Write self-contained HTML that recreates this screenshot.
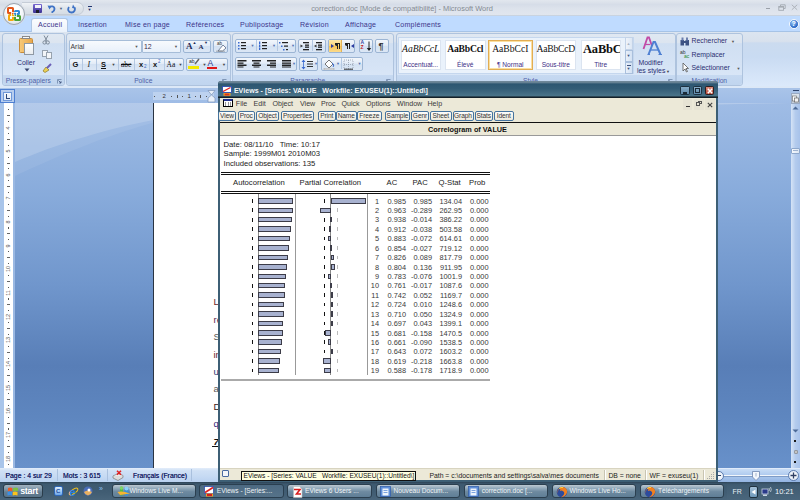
<!DOCTYPE html>
<html><head><meta charset="utf-8">
<style>
*{margin:0;padding:0;box-sizing:border-box}
html,body{width:800px;height:500px;overflow:hidden;background:#6d93c8;font-family:"Liberation Sans",sans-serif}
div,span,svg{position:absolute;white-space:nowrap}
/* word chrome */
#title{left:0;top:0;width:800px;height:16px;background:linear-gradient(#e2e7ee,#d6dde8 30%,#dde3ec 60%,#e1e6ee);border-bottom:1px solid #c9d3e0}
#tabs{left:0;top:16px;width:800px;height:16px;background:#bfdbff;border-bottom:1px solid #a6c3e6}
#ribbon{left:0;top:32px;width:800px;height:55px;background:linear-gradient(#dce5f0,#d8e1ed 17%,#cbdbef 20%,#c9dbf2 45%,#dceafb 100%)}
.grp{top:32.5px;height:53px;border:1px solid #aec3de;border-radius:3px;background:linear-gradient(#e0e8f2,#dce5f0 17%,#d0dff2 19%,#d5e3f5 60%,#dbe8f8)}
.glab{left:0;bottom:0;width:100%;height:10px;background:linear-gradient(#c6d9f1,#c0d5ef);font-size:6.7px;color:#4f5fa6;text-align:center;line-height:10px;padding-top:1px;border-radius:0 0 3px 3px}
.rt{font-size:6.9px;color:#2a2f72;line-height:8px}
.tab{top:21px;font-size:7.1px;color:#3c358a;line-height:8px;letter-spacing:0.2px}
.box{border:1px solid #a6bdd8;background:linear-gradient(#f7fafd,#e8f0fa);border-radius:1px}
.bg2{border:1px solid #9cb5d4;border-radius:2px;background:linear-gradient(#f3f7fc,#e2ebf7 45%,#d3e1f2 50%,#dce7f5)}
.sep{width:1px;background:#b4c8e2}
.stl{top:40px;height:30px;background:#fff;border:1px solid #dbe4f0}
.stl .s1{left:0;top:2px;width:100%;text-align:center;font-family:"Liberation Serif",serif;font-size:9.6px;color:#111;line-height:11px}
.stl .s2{left:0;top:20px;width:100%;text-align:center;font-size:6.6px;color:#3d2f86;line-height:8px}
.dd{font-size:4px;color:#444;line-height:4px}
/* doc */
.vr{left:4px;width:8.8px;height:6px;text-align:center;font-size:5.5px;color:#555;line-height:6px;transform:rotate(-90deg)}
.vd{width:1.2px;height:1.2px;background:#555}
.vh{width:3.5px;height:1px;background:#666}
.wl{left:213.5px;font-size:9.5px;line-height:10px}
.stt{top:471.5px;font-size:6.85px;color:#1f2868;line-height:8px;text-shadow:0 0 0.2px #1f2868}
/* taskbar */
.tbtn{top:484.4px;height:14px;border:1px solid #2b3f4f;border-radius:3px;background:linear-gradient(#bcc8d1,#8ea6b8 30%,#6e8aa0 55%,#5f7e96);font-size:6.6px;color:#f0f4f7;line-height:12px;padding-left:17px;overflow:hidden}
.tbtn.act{background:linear-gradient(#4d6a82,#557289);border-color:#2a3f50}
/* EViews */
#ev{left:218px;top:81px;width:500px;height:401px;background:#3d5f75;border-radius:3px 3px 0 0}
#evtitle{left:0;top:0;width:500px;height:16.5px;background:linear-gradient(#72889a,#6a8496 8%,#2d5671 18%,#335c76 45%,#4a7489 88%,#1a2a34 93%,#0f1a20);border-radius:3px 3px 0 0}
#evtt{left:15.9px;top:6.5px;font-size:7.1px;font-weight:bold;color:#f4f6f8;line-height:7px}
#evmenu{left:2px;top:16.5px;width:496px;height:12.5px;background:#ece9d8}
#evmenu span{top:2.5px;font-size:7.1px;color:#3a3a3a;line-height:8px}
#evtool{left:2px;top:29px;width:496px;height:12px;background:#ece9d8}
.tb{top:0.5px;height:10.5px;border:1px solid #45739e;border-radius:2px;background:linear-gradient(#fdfdfb,#ece9dc);font-size:6.6px;color:#333;text-align:center;line-height:8.5px;letter-spacing:-0.1px}
.bar{height:5.6px;background:#a8b2d0;border:1px solid #3c3c48}
.dash{width:1.2px;height:3.8px;background:#111}
.dash.g{background:#bbb}
.num{font-size:7.4px;color:#3a3a3a;text-align:right;line-height:7px}
.t7{font-size:7.7px;color:#222;line-height:8px}

</style></head><body>
<div id="title"></div>
<div style="left:310.5px;top:5px;width:183px;text-align:center;font-size:7.45px;color:#858b93;line-height:8px">correction.doc [Mode de compatibilité] - Microsoft Word</div>
<div style="left:765.8px;top:7.8px;width:4.5px;height:1.2px;background:#9ba1aa"></div>
<svg style="left:777.5px;top:4px" width="8" height="7"><path d="M2.5 2.5V0.8H7.2V4.5H5.5" stroke="#a3a9b1" stroke-width="0.9" fill="none"/><rect x="0.8" y="2.5" width="4.7" height="3.8" stroke="#a3a9b1" stroke-width="0.9" fill="none"/><path d="M0.8 3H5.5" stroke="#a3a9b1" stroke-width="1.2"/></svg>
<svg style="left:791px;top:4px" width="7" height="6.5"><path d="M0.8 0.8L6.2 5.8M6.2 0.8L0.8 5.8" stroke="#aeb3ba" stroke-width="1"/></svg>
<!-- quick access -->
<div style="left:22px;top:1.5px;width:62px;height:13px;border-radius:0 7px 7px 0;background:linear-gradient(#f0f3f6,#dfe4ea 50%,#d5dce5);border:1px solid #c5ccd6;border-left:none"></div>
<div style="left:33px;top:4px;width:9px;height:9px;background:linear-gradient(#7a6ad2,#3c3394);border-radius:1px"></div>
<div style="left:34.5px;top:4.5px;width:6px;height:3.5px;background:#f2f2fa"></div>
<div style="left:35.5px;top:10px;width:3px;height:2.5px;background:#1d1d2a"></div>
<svg style="left:47px;top:4px" width="9" height="9"><path d="M2 3.5C4 1.5 7.5 2 7.5 5C7.5 7 6 8 4.5 8.5" stroke="#3f73c6" stroke-width="1.8" fill="none"/><path d="M0.5 1.5L2.5 5.5L4.5 2Z" fill="#3f73c6"/></svg>
<div class="dd" style="left:59px;top:7px;color:#4d5e7a">▼</div>
<svg style="left:67px;top:3.5px" width="9" height="10"><path d="M2 3C0.5 5 1 8.5 4.5 8.5C7.5 8.5 8.5 5.5 7.5 3.5" stroke="#3f73c6" stroke-width="1.8" fill="none"/><path d="M6 0.5L8.5 4.5L5 4Z" fill="#3f73c6"/></svg>
<div style="left:87.5px;top:6px;width:4px;height:1px;background:#23356e"></div>
<div class="dd" style="left:87.5px;top:7.5px;color:#23356e">▼</div>
<div id="tabs"></div>
<div style="left:30.5px;top:17.5px;width:37px;height:15.5px;border:1px solid #afc6e3;border-bottom:none;border-radius:3px 3px 0 0;background:linear-gradient(#fbfcfe,#e9f1fb)"></div>
<div class="tab" style="left:38px">Accueil</div>
<div class="tab" style="left:78px">Insertion</div>
<div class="tab" style="left:125px">Mise en page</div>
<div class="tab" style="left:186px">Références</div>
<div class="tab" style="left:240px">Publipostage</div>
<div class="tab" style="left:300px">Révision</div>
<div class="tab" style="left:345px">Affichage</div>
<div class="tab" style="left:395px">Compléments</div>
<div style="left:788.5px;top:18.5px;width:10.5px;height:10.5px;border-radius:50%;background:radial-gradient(circle at 40% 35%,#9ccbf8,#2262c4 70%,#1a4aa0);border:1px solid #f4f8fd;font-size:7px;font-weight:bold;color:#fff;text-align:center;line-height:8.5px">?</div>
<!-- office button -->
<div style="left:2.9px;top:2.9px;width:22.6px;height:22.6px;border-radius:50%;background:radial-gradient(circle at 50% 35%,#ffffff 30%,#eef2f6 60%,#c9d0d8);border:1px solid #9aa3ae;box-shadow:0 0 0 0.6px #d5dbe2"></div>
<div style="left:7px;top:7px;width:7px;height:7px;border:2px solid #e4561b;border-radius:1.5px"></div>
<div style="left:13.5px;top:10px;width:6px;height:5px;border:2px solid #2f8ad8;border-radius:1.5px"></div>
<div style="left:8px;top:14px;width:6px;height:7px;border:2px solid #f4a90f;border-radius:1.5px"></div>
<div style="left:14px;top:15px;width:7px;height:6px;border:2px solid #49a336;border-radius:1.5px"></div>
<div style="left:11px;top:12px;width:6px;height:5px;border:1px solid #fff;opacity:0.8"></div>
<div id="ribbon"></div>
<div class="grp" style="left:2px;width:62.5px"><div class="glab" style="padding-right:10px">Presse-papiers</div></div>
<div class="grp" style="left:66px;width:164.5px"><div class="glab" style="padding-right:10px">Police</div></div>
<div class="grp" style="left:231.5px;width:162.5px"><div class="glab" style="padding-right:10px">Paragraphe</div></div>
<div class="grp" style="left:395.5px;width:280px"><div class="glab" style="padding-right:10px">Style</div></div>
<div class="grp" style="left:676px;width:66.5px"><div class="glab">Modification</div></div>
<svg style="left:57px;top:79px" width="5" height="5"><path d="M0.5 4.5V0.5H4.5" stroke="#6f86a8" stroke-width="0.8" fill="none"/><path d="M1.5 1.5L4 4M4 2.2V4H2.2" stroke="#3b4f78" stroke-width="0.8" fill="none"/></svg>
<svg style="left:222px;top:79px" width="5" height="5"><path d="M0.5 4.5V0.5H4.5" stroke="#6f86a8" stroke-width="0.8" fill="none"/><path d="M1.5 1.5L4 4M4 2.2V4H2.2" stroke="#3b4f78" stroke-width="0.8" fill="none"/></svg>
<svg style="left:386px;top:79px" width="5" height="5"><path d="M0.5 4.5V0.5H4.5" stroke="#6f86a8" stroke-width="0.8" fill="none"/><path d="M1.5 1.5L4 4M4 2.2V4H2.2" stroke="#3b4f78" stroke-width="0.8" fill="none"/></svg>
<svg style="left:667.5px;top:79px" width="5" height="5"><path d="M0.5 4.5V0.5H4.5" stroke="#6f86a8" stroke-width="0.8" fill="none"/><path d="M1.5 1.5L4 4M4 2.2V4H2.2" stroke="#3b4f78" stroke-width="0.8" fill="none"/></svg>
<!-- presse papiers -->
<div style="left:18.5px;top:37.5px;width:14px;height:15px;background:linear-gradient(90deg,#f7c978,#e9a84c);border:1px solid #c98c38;border-radius:1.5px"></div>
<div style="left:21.5px;top:36px;width:8px;height:3px;background:#fafafa;border:1px solid #8a8a8a"></div>
<div style="left:24px;top:43px;width:10px;height:11.5px;background:linear-gradient(#fff,#e9ecef);border:1px solid #8f99a4"></div>
<div class="rt" style="left:17px;top:58.5px">Coller</div>
<svg style="left:23.5px;top:68px" width="6" height="4"><path d="M0.5 0.5H5.5L3 3.5Z" fill="#3a4670"/></svg>
<svg style="left:42px;top:35px" width="8" height="10"><path d="M2 0.5L5 6M6 0.5L3 6" stroke="#7d8a99" stroke-width="1" fill="none"/><circle cx="2.5" cy="7.5" r="1.6" stroke="#7d8a99" fill="none"/><circle cx="5.8" cy="7.5" r="1.6" stroke="#7d8a99" fill="none"/></svg>
<div style="left:42px;top:50px;width:6px;height:6.5px;border:1px solid #97a2ae;background:#f3f5f8"></div>
<div style="left:45.5px;top:52px;width:6px;height:6.5px;border:1px solid #97a2ae;background:#f3f5f8"></div>
<svg style="left:41.5px;top:63px" width="11" height="10"><path d="M1 8L4 4L7 7L3 9.5Z" fill="#ecd055" stroke="#8d7a2a" stroke-width="0.7"/><path d="M5 5L9 1" stroke="#6a5fb7" stroke-width="2"/></svg>
<!-- police -->
<div class="box" style="left:68.5px;top:39.5px;width:73.5px;height:13px"></div>
<div class="rt" style="left:70.5px;top:42.5px;color:#3a3a3a">Arial</div>
<div class="dd" style="left:134.5px;top:45px;color:#555">▼</div>
<div class="box" style="left:142px;top:39.5px;width:38.5px;height:13px"></div>
<div class="rt" style="left:144px;top:42.5px;color:#3a2a4a">12</div>
<div class="dd" style="left:174px;top:45px;color:#555">▼</div>
<div class="bg2" style="left:182.8px;top:39.5px;width:28px;height:13px"></div>
<div style="left:186px;top:42px;font-family:'Liberation Serif',serif;font-size:9px;font-weight:bold;color:#1d2a55;line-height:9px">A</div>
<div class="dd" style="left:192.5px;top:40.5px;color:#1d2a55">▲</div>
<div style="left:198.5px;top:44px;font-family:'Liberation Serif',serif;font-size:7px;font-weight:bold;color:#1d2a55;line-height:7px">A</div>
<div class="dd" style="left:204px;top:40.5px;color:#1d2a55">▼</div>
<div class="bg2" style="left:212.8px;top:39.5px;width:15px;height:13px"></div>
<svg style="left:214px;top:40px" width="13" height="12"><text x="3" y="5" font-size="4.5" fill="#333" font-family="Liberation Sans">ab</text><path d="M4 11L9 5L12 8L8.5 11Z" fill="#fff" stroke="#5a6a86" stroke-width="0.8"/><path d="M2 11.2H11" stroke="#777" stroke-width="0.6"/></svg>
<div class="bg2" style="left:68.5px;top:57.5px;width:115px;height:13px"></div>
<div class="sep" style="left:82px;top:58.5px;height:11px"></div>
<div class="sep" style="left:96px;top:58.5px;height:11px"></div>
<div class="sep" style="left:118px;top:58.5px;height:11px"></div>
<div class="sep" style="left:134px;top:58.5px;height:11px"></div>
<div class="sep" style="left:149px;top:58.5px;height:11px"></div>
<div class="sep" style="left:164px;top:58.5px;height:11px"></div>
<div style="left:72.5px;top:60.5px;font-size:7.5px;font-weight:bold;color:#111;line-height:8px">G</div>
<div style="left:87.5px;top:60.5px;font-family:'Liberation Serif',serif;font-size:8px;font-style:italic;color:#222;line-height:8px">I</div>
<div style="left:101px;top:60.5px;font-size:7.5px;font-weight:bold;color:#111;line-height:8px;text-decoration:underline">S</div>
<div class="dd" style="left:111.5px;top:63px;color:#444">▼</div>
<div style="left:121px;top:60.5px;font-family:'Liberation Serif',serif;font-size:7.5px;color:#111;line-height:8px;text-decoration:line-through">abe</div>
<div style="left:139px;top:60.5px;font-size:7.5px;font-weight:bold;color:#111;line-height:8px">x</div>
<div style="left:144px;top:64px;font-size:4.5px;color:#3a64c0;line-height:5px">2</div>
<div style="left:153px;top:60.5px;font-size:7.5px;font-weight:bold;color:#111;line-height:8px">x</div>
<div style="left:158px;top:59px;font-size:4.5px;color:#3a64c0;line-height:5px">2</div>
<div style="left:166.5px;top:60.5px;font-family:'Liberation Serif',serif;font-size:7.5px;color:#111;line-height:8px">Aa</div>
<div class="dd" style="left:178.5px;top:63px;color:#444">▼</div>
<div class="bg2" style="left:185.5px;top:57.5px;width:42px;height:13px"></div>
<div style="left:189px;top:58.5px;font-size:5px;color:#222;line-height:5px">ab</div>
<svg style="left:194px;top:58px" width="6" height="7"><path d="M1 6L5 1" stroke="#666" stroke-width="1.5"/></svg>
<div style="left:187.5px;top:65.5px;width:11px;height:3px;background:#f4ea00"></div>
<div class="dd" style="left:202.5px;top:63px;color:#444">▼</div>
<div style="left:207.5px;top:58.5px;font-size:8.5px;color:#27358a;line-height:8px">A</div>
<div style="left:206.5px;top:66.5px;width:10px;height:2.5px;background:#e01818"></div>
<div class="dd" style="left:222px;top:63px;color:#444">▼</div>
<!-- paragraphe -->
<div class="bg2" style="left:234.5px;top:39px;width:61px;height:13.5px"></div>
<div class="sep" style="left:256px;top:40px;height:11px"></div>
<div class="sep" style="left:277px;top:40px;height:11px"></div>
<svg style="left:237px;top:41px" width="60" height="10">
 <g fill="#3a6ad0"><rect x="1" y="1" width="1.5" height="1.5"/><rect x="1" y="4" width="1.5" height="1.5"/><rect x="1" y="7" width="1.5" height="1.5"/></g>
 <g fill="#222"><rect x="4" y="1" width="5" height="1.2"/><rect x="4" y="4" width="5" height="1.2"/><rect x="4" y="7" width="5" height="1.2"/></g>
 <g fill="#3a6ad0"><rect x="22" y="0.5" width="1.3" height="2.5"/><rect x="22" y="3.5" width="1.3" height="2.5"/><rect x="22" y="6.5" width="1.3" height="2.5"/></g>
 <g fill="#222"><rect x="25" y="1" width="5" height="1.2"/><rect x="25" y="4" width="5" height="1.2"/><rect x="25" y="7" width="5" height="1.2"/></g>
 <g fill="#3a6ad0"><rect x="42" y="1" width="1.5" height="1.5"/><rect x="44" y="4.5" width="1.5" height="1.5"/><rect x="46" y="8" width="1.5" height="1.5"/></g>
 <g fill="#222"><rect x="45" y="1" width="6" height="1.2"/><rect x="47" y="4.5" width="4" height="1.2"/><rect x="49" y="8" width="2" height="1.2"/></g>
</svg>
<div class="dd" style="left:250.5px;top:44px;color:#5572b0">▼</div>
<div class="dd" style="left:272px;top:44px;color:#5572b0">▼</div>
<div class="dd" style="left:291px;top:44px;color:#5572b0">▼</div>
<div class="bg2" style="left:298.4px;top:39px;width:27.5px;height:13.5px"></div>
<div class="sep" style="left:312px;top:40px;height:11px"></div>
<svg style="left:300px;top:41px" width="25" height="10">
 <g fill="#222"><rect x="3" y="1" width="6" height="1.3"/><rect x="5" y="3.5" width="4" height="1.3"/><rect x="5" y="5.5" width="4" height="1.3"/><rect x="3" y="8" width="6" height="1.3"/></g>
 <path d="M0.5 3.5L3 5L0.5 6.5Z" fill="#333"/>
 <g fill="#222"><rect x="16" y="1" width="6" height="1.3"/><rect x="18" y="3.5" width="4" height="1.3"/><rect x="18" y="5.5" width="4" height="1.3"/><rect x="16" y="8" width="6" height="1.3"/></g>
 <path d="M16.5 3.5L14 5L16.5 6.5Z" fill="#333"/>
</svg>
<div class="bg2" style="left:328px;top:39px;width:27px;height:13.5px"></div>
<div style="left:328.5px;top:39.5px;width:13.5px;height:12.5px;background:linear-gradient(#fde8a8,#fcd57c 50%,#fac453 51%,#fcdb8c);border-right:1px solid #e2b35a"></div>
<svg style="left:330px;top:41px" width="25" height="10">
 <path d="M1 3L4 5L1 7Z" fill="#2a3aa0"/><path d="M5 2H10V8H9V3H8V8H7V5C5.5 5 5 4 5 3.5Z" fill="#222"/>
 <path d="M15 2H20V8H19V3H18V8H17V5C15.5 5 15 4 15 3.5Z" fill="#222"/><path d="M24 3L21 5L24 7Z" fill="#2a3aa0"/>
</svg>
<div class="bg2" style="left:358.5px;top:39px;width:14.5px;height:13.5px"></div>
<div style="left:360.5px;top:40px;font-size:5px;color:#3a4aa0;line-height:5px;font-weight:bold">A</div>
<div style="left:360.5px;top:45px;font-size:5px;color:#c02020;line-height:5px;font-weight:bold">Z</div>
<svg style="left:366px;top:40.5px" width="6" height="11"><path d="M3 0.5V9" stroke="#222" stroke-width="1"/><path d="M0.8 7L3 10L5.2 7Z" fill="#222"/></svg>
<div class="bg2" style="left:375.4px;top:39px;width:14px;height:13.5px"></div>
<div style="left:378.5px;top:40.5px;font-size:9px;font-weight:bold;color:#333;line-height:10px">¶</div>
<div class="bg2" style="left:234.5px;top:57.3px;width:62.5px;height:13.3px"></div>
<svg style="left:236px;top:59px" width="60" height="9">
 <g fill="#222">
 <rect x="1.5" y="1" width="9" height="1.5"/><rect x="1.5" y="3.5" width="6" height="1.3"/><rect x="1.5" y="5.5" width="9" height="1.5"/><rect x="1.5" y="7.5" width="6" height="1"/>
 <rect x="16" y="1" width="9" height="1.5"/><rect x="17.5" y="3.5" width="6" height="1.3"/><rect x="16" y="5.5" width="9" height="1.5"/><rect x="17.5" y="7.5" width="6" height="1"/>
 <rect x="31" y="1" width="9" height="1.5"/><rect x="34" y="3.5" width="6" height="1.3"/><rect x="31" y="5.5" width="9" height="1.5"/><rect x="34" y="7.5" width="6" height="1"/>
 <rect x="46" y="1" width="9" height="1.5"/><rect x="46" y="3.5" width="9" height="1.3"/><rect x="46" y="5.5" width="9" height="1.5"/><rect x="46" y="7.5" width="9" height="1"/>
 </g>
</svg>
<div class="dd" style="left:292px;top:62px;color:#5572b0">▼</div>
<div class="bg2" style="left:299.3px;top:57.3px;width:19px;height:13.3px"></div>
<svg style="left:301px;top:58.5px" width="16" height="11"><path d="M2.5 1V10" stroke="#3a6ad0" stroke-width="0.8"/><path d="M0.5 3L2.5 0.5L4.5 3ZM0.5 8L2.5 10.5L4.5 8Z" fill="#3a6ad0"/><g fill="#333"><rect x="6" y="2" width="6" height="1"/><rect x="6" y="4.5" width="6" height="1"/><rect x="6" y="7" width="6" height="1"/></g></svg>
<div class="dd" style="left:314px;top:62px;color:#5572b0">▼</div>
<div class="bg2" style="left:321.3px;top:57.3px;width:41.7px;height:13.3px"></div>
<div class="sep" style="left:341px;top:58.3px;height:11px"></div>
<svg style="left:323px;top:58px" width="18" height="12"><path d="M2 6L6 2L10 6L6 10Z" fill="#fff" stroke="#555" stroke-width="0.8"/><path d="M9 5C11 6 11 8 10 9" stroke="#3a6ad0" stroke-width="1" fill="none"/><rect x="1" y="10.3" width="10" height="1.5" fill="#fff" stroke="#999" stroke-width="0.5"/></svg>
<div class="dd" style="left:336px;top:62px;color:#5572b0">▼</div>
<svg style="left:343px;top:58.5px" width="12" height="11"><g stroke="#8a94a4" stroke-width="0.7" stroke-dasharray="1 1" fill="none"><rect x="1" y="1" width="9" height="9"/><path d="M5.5 1V10M1 5.5H10"/></g><path d="M1 10.2H10" stroke="#333" stroke-width="1"/></svg>
<div class="dd" style="left:357.5px;top:62px;color:#5572b0">▼</div>
<!-- styles -->
<div style="left:398px;top:37px;width:236px;height:37px;border:1px solid #c5d7ee;background:#eaf2fb"></div>
<div class="stl" style="left:401px;width:39.5px"><div class="s1" style="font-style:italic">AaBbCcL</div><div class="s2">Accentuat...</div></div>
<div class="stl" style="left:445px;width:40.5px"><div class="s1" style="font-weight:bold;letter-spacing:-0.2px">AaBbCcl</div><div class="s2">Élevé</div></div>
<div class="stl" style="left:488px;width:44.5px;border:1px solid #e2ad53;box-shadow:inset 0 0 0 1px #fbe0a0"><div class="s1">AaBbCcI</div><div class="s2">¶ Normal</div></div>
<div class="stl" style="left:535.5px;width:40.5px"><div class="s1" style="letter-spacing:-0.2px">AaBbCcD</div><div class="s2">Sous-titre</div></div>
<div class="stl" style="left:580.5px;width:40.5px;overflow:hidden"><div class="s1" style="font-size:12.5px;font-weight:bold;top:2px;left:1.5px;text-align:left;line-height:13px;letter-spacing:-0.2px">AaBbC</div><div class="s2">Titre</div></div>
<div style="left:624.5px;top:37px;width:8.5px;height:12.5px;border:1px solid #c3d3e8;background:linear-gradient(90deg,#eef3fa,#dde7f4)"></div>
<div style="left:624.5px;top:49.5px;width:8.5px;height:12px;border:1px solid #a9bfdc;background:linear-gradient(90deg,#e8f0fa,#d3e1f3)"></div>
<div style="left:624.5px;top:61.5px;width:8.5px;height:12px;border:1px solid #a9bfdc;background:linear-gradient(90deg,#e8f0fa,#d3e1f3)"></div>
<div class="dd" style="left:626.5px;top:42px;color:#aab4c4">▲</div>
<div class="dd" style="left:626.5px;top:54px;color:#3c4f7a">▼</div>
<div style="left:626.5px;top:65px;width:4px;height:1px;background:#3c4f7a"></div>
<div class="dd" style="left:626.5px;top:66.5px;color:#3c4f7a">▼</div>
<svg style="left:641px;top:35px" width="24" height="22"><path d="M2.5 14L6.5 2.5H8L11 11" stroke="#c24aa6" stroke-width="1.8" fill="none"/><path d="M4.5 9.5H9" stroke="#c24aa6" stroke-width="1.2"/><path d="M7.5 19.5L12.5 7H14L19.5 19.5" stroke="#4f80d2" stroke-width="2" fill="none"/><path d="M10 15H17.5" stroke="#4f80d2" stroke-width="1.3"/><path d="M6.5 19.5H9M17.5 19.5H21" stroke="#4f80d2" stroke-width="1"/></svg>
<div class="rt" style="left:638.5px;top:59px">Modifier</div>
<div class="rt" style="left:637px;top:67px">les styles</div>
<div class="dd" style="left:666px;top:70px;color:#444">▼</div>
<!-- modification -->
<svg style="left:680px;top:36.5px" width="10" height="9"><rect x="0.5" y="3" width="3.5" height="5.5" fill="#3d5283"/><rect x="5.5" y="3" width="3.5" height="5.5" fill="#3d5283"/><rect x="1.5" y="0.5" width="2" height="3" fill="#6c7fae"/><rect x="6" y="0.5" width="2" height="3" fill="#6c7fae"/><rect x="3" y="4" width="3" height="2" fill="#3d5283"/></svg>
<div class="rt" style="left:691.5px;top:37px">Rechercher</div>
<div class="dd" style="left:731px;top:40px;color:#555">▼</div>
<div style="left:680px;top:49.5px;font-size:5px;color:#333;line-height:5px">ab</div>
<div style="left:684px;top:54px;font-size:5px;color:#2a8a2a;line-height:5px">ac</div>
<div class="rt" style="left:691.5px;top:50.5px">Remplacer</div>
<svg style="left:682px;top:62px" width="7" height="11"><path d="M1 1V9L3 7L4.5 10L5.5 9.5L4 6.5H6.5Z" fill="#fff" stroke="#555" stroke-width="0.8"/></svg>
<div class="rt" style="left:691.5px;top:64px">Sélectionner</div>
<div class="dd" style="left:736.5px;top:67px;color:#555">▼</div>

<div style="left:0;top:86px;width:800px;height:1.5px;background:#dce8f7"></div>
<div style="left:0;top:87.5px;width:800px;height:15.5px;background:linear-gradient(#a9c4e9,#9fbce6)"></div>
<div style="left:0;top:89px;width:15px;height:14px;border:1px solid #4e7fd1;background:#b7cdee"></div>
<div style="left:3px;top:91.5px;width:9px;height:9px;border:1px solid #7099d9;background:linear-gradient(#f5f9fd,#dfe9f7)"></div>
<div style="left:5.8px;top:94px;width:1.1px;height:4.5px;background:#2a4678"></div>
<div style="left:5.8px;top:97.5px;width:4px;height:1.1px;background:#2a4678"></div>
<div style="left:152.5px;top:92px;width:61.5px;height:8px;background:#bdd2ef"></div>
<div style="left:162.5px;top:93px;font-size:6px;color:#333;line-height:6px">2</div>
<div style="left:187.5px;top:93px;font-size:6px;color:#333;line-height:6px">1</div>
<div style="left:154px;top:95.5px;width:1px;height:1.5px;background:#555"></div>
<div style="left:170.5px;top:95.5px;width:1px;height:1.5px;background:#555"></div>
<div style="left:182px;top:95.5px;width:1px;height:1.5px;background:#555"></div>
<div style="left:194.5px;top:95.5px;width:1px;height:1.5px;background:#555"></div>
<div style="left:206px;top:95.5px;width:1px;height:1.5px;background:#555"></div>
<div style="left:176.5px;top:94.5px;width:1px;height:3px;background:#555"></div>
<div style="left:200px;top:94.5px;width:1px;height:3px;background:#555"></div>
<svg style="left:207px;top:89.5px" width="9" height="13"><path d="M1 0.5H8L4.5 5L8 8V12H1V8L4.5 5Z" fill="#e9f0f9" stroke="#7c94b8" stroke-width="0.7"/></svg>
<div style="left:0;top:103px;width:791px;height:365px;background:linear-gradient(#9fbce5 0%,#88abdb 25%,#7096cc 50%,#587eb7 72%,#5e86bf 86%,#6891ca 100%)"></div>
<svg style="left:15px;top:103px" width="776" height="120"><path d="M0 73C45 52 95 30 160 14L776 0H0Z" fill="#fff" fill-opacity="0.07"/><path d="M0 59C40 42 90 25 160 13L776 0H0Z" fill="#fff" fill-opacity="0.17"/></svg>
<div style="left:0;top:103px;width:4px;height:365px;background:#a9c5ea"></div>
<div style="left:12.8px;top:103px;width:2.2px;height:365px;background:#9ab8e2"></div>
<div style="left:4px;top:103px;width:8.8px;height:365px;background:#fff"></div>
<div class="vd" style="left:7.8px;top:109.2px"></div>
<div class="vh" style="left:6.6px;top:115.2px"></div>
<div class="vd" style="left:7.8px;top:121.0px"></div>
<div class="vr" style="top:124.5px">4</div>
<div class="vd" style="left:7.8px;top:132.8px"></div>
<div class="vh" style="left:6.6px;top:138.8px"></div>
<div class="vd" style="left:7.8px;top:144.6px"></div>
<div class="vr" style="top:148.2px">5</div>
<div class="vd" style="left:7.8px;top:156.5px"></div>
<div class="vh" style="left:6.6px;top:162.5px"></div>
<div class="vd" style="left:7.8px;top:168.3px"></div>
<div class="vr" style="top:171.8px">6</div>
<div class="vd" style="left:7.8px;top:180.1px"></div>
<div class="vh" style="left:6.6px;top:186.1px"></div>
<div class="vd" style="left:7.8px;top:191.9px"></div>
<div class="vr" style="top:195.4px">7</div>
<div class="vd" style="left:7.8px;top:203.8px"></div>
<div class="vh" style="left:6.6px;top:209.8px"></div>
<div class="vd" style="left:7.8px;top:215.6px"></div>
<div class="vr" style="top:219.1px">8</div>
<div class="vd" style="left:7.8px;top:227.4px"></div>
<div class="vh" style="left:6.6px;top:233.4px"></div>
<div class="vd" style="left:7.8px;top:239.2px"></div>
<div class="vr" style="top:242.8px">9</div>
<div class="vd" style="left:7.8px;top:251.1px"></div>
<div class="vh" style="left:6.6px;top:257.1px"></div>
<div class="vd" style="left:7.8px;top:262.9px"></div>
<div class="vr" style="top:266.4px">10</div>
<div class="vd" style="left:7.8px;top:274.7px"></div>
<div class="vh" style="left:6.6px;top:280.7px"></div>
<div class="vd" style="left:7.8px;top:286.5px"></div>
<div class="vr" style="top:290.0px">11</div>
<div class="vd" style="left:7.8px;top:298.4px"></div>
<div class="vh" style="left:6.6px;top:304.4px"></div>
<div class="vd" style="left:7.8px;top:310.2px"></div>
<div class="vr" style="top:313.7px">12</div>
<div class="vd" style="left:7.8px;top:322.0px"></div>
<div class="vh" style="left:6.6px;top:328.0px"></div>
<div class="vd" style="left:7.8px;top:333.8px"></div>
<div class="vr" style="top:337.4px">13</div>
<div class="vd" style="left:7.8px;top:345.7px"></div>
<div class="vh" style="left:6.6px;top:351.7px"></div>
<div class="vd" style="left:7.8px;top:357.5px"></div>
<div class="vr" style="top:361.0px">14</div>
<div class="vd" style="left:7.8px;top:369.3px"></div>
<div class="vh" style="left:6.6px;top:375.3px"></div>
<div class="vd" style="left:7.8px;top:381.1px"></div>
<div class="vr" style="top:384.6px">15</div>
<div class="vd" style="left:7.8px;top:393.0px"></div>
<div class="vh" style="left:6.6px;top:399.0px"></div>
<div class="vd" style="left:7.8px;top:404.8px"></div>
<div class="vr" style="top:408.3px">16</div>
<div class="vd" style="left:7.8px;top:416.6px"></div>
<div class="vh" style="left:6.6px;top:422.6px"></div>
<div class="vd" style="left:7.8px;top:428.4px"></div>
<div class="vr" style="top:431.9px">17</div>
<div class="vd" style="left:7.8px;top:440.3px"></div>
<div class="vh" style="left:6.6px;top:446.3px"></div>
<div class="vd" style="left:7.8px;top:452.1px"></div>
<div class="vr" style="top:455.6px">18</div>
<div class="vd" style="left:7.8px;top:463.9px"></div>
<div style="left:153px;top:103px;width:70px;height:365px;background:#fff;border-left:1px solid #2a3442"></div>
<div class="wl" style="top:297.4px;color:#6a1f2a;">L</div>
<div class="wl" style="top:314.8px;color:#5a2a50;">re</div>
<div class="wl" style="top:332.2px;color:#555;">S</div>
<div class="wl" style="top:349.6px;color:#6a2530;">in</div>
<div class="wl" style="top:367.0px;color:#2a3470;">u</div>
<div class="wl" style="top:384.4px;color:#555;">a</div>
<div class="wl" style="top:401.8px;color:#3a1a1a;">D</div>
<div class="wl" style="top:419.2px;color:#30287a;">q</div>
<div class="wl" style="top:436.6px;color:#111;font-weight:bold;font-style:italic">7</div>
<div style="left:212px;top:445.5px;width:6px;height:1.2px;background:#111"></div>
<div style="left:790.5px;top:87.5px;width:9.5px;height:380.5px;background:linear-gradient(90deg,#d5e3f6,#b3cbed 50%,#a7c2ea)"></div>
<div style="left:790.5px;top:87.5px;width:9.5px;height:5.5px;background:#a9c3e8"></div>
<div style="left:792.5px;top:89.8px;width:6px;height:1.6px;background:#2f446c"></div>
<div style="left:790.5px;top:93px;width:9.5px;height:10.5px;background:linear-gradient(#dfe6ee,#c3ccd8);border:1px solid #9aaac2"></div>
<svg style="left:792px;top:94.5px" width="7" height="8"><rect x="0.5" y="1" width="4" height="5" fill="#fff" stroke="#666" stroke-width="0.6"/><rect x="2.5" y="3" width="4" height="4" fill="#f4f4f4" stroke="#555" stroke-width="0.6"/></svg>
<svg style="left:792px;top:105.5px" width="7" height="4"><path d="M0.5 3.5L3.5 0.5L6.5 3.5Z" fill="#4c6a97"/></svg>
<div style="left:790.5px;top:148px;width:9.5px;height:5.5px;background:linear-gradient(90deg,#f6f9fd,#dbe6f4);border:1px solid #8ea8cc;border-radius:1px"></div>
<div style="left:792.5px;top:150px;width:5px;height:1px;background:#9fb3d0"></div>
<svg style="left:792px;top:429px" width="7" height="4"><path d="M0.5 0.5L3.5 3.5L6.5 0.5Z" fill="#4c6a97"/></svg>
<div style="left:794.3px;top:440px;width:2.2px;height:2.2px;background:#1a1a1a"></div>
<div style="left:793.5px;top:450.3px;width:4px;height:4px;border-radius:50%;background:radial-gradient(#eee,#444)"></div>
<div style="left:794.3px;top:461px;width:2.2px;height:2.2px;background:#1a1a1a"></div>
<div style="left:0;top:468px;width:800px;height:13.7px;background:linear-gradient(#e3edfa,#cfe0f5 20%,#c6daf3 60%,#b9d1f0)"></div>
<div class="stt" style="left:5.5px">Page : 4 sur 29</div>
<div style="left:57px;top:469px;width:1px;height:12px;background:#eef4fb;border-left:1px solid #a9c0de"></div>
<div class="stt" style="left:63px">Mots : 3 615</div>
<div style="left:107px;top:469px;width:1px;height:12px;background:#eef4fb;border-left:1px solid #a9c0de"></div>
<svg style="left:112px;top:469.5px" width="12" height="11"><path d="M1 6L6 8.5L11 5.5L6 3.5Z" fill="#f2f2f2" stroke="#777" stroke-width="0.7"/><path d="M1 6V8L6 10.5L11 7.5V5.5" fill="#ddd" stroke="#777" stroke-width="0.7"/><path d="M5 0.8L9 4.8M9 0.8L5 4.8" stroke="#e02020" stroke-width="1.5"/></svg>
<div class="stt" style="left:133px">Français (France)</div>
<div style="left:191px;top:469px;width:1px;height:12px;background:#eef4fb;border-left:1px solid #a9c0de"></div>
<div style="left:716px;top:468.8px;width:84px;height:12.8px;background:linear-gradient(#c9ddf6,#adc9ee 50%,#93b4e2)"></div>
<div style="left:718px;top:475px;width:70px;height:1px;background:#f2f6fb"></div>
<div style="left:718px;top:476px;width:70px;height:0.8px;background:#7f9cc6"></div>
<div style="left:713px;top:470.5px;width:10.5px;height:10.5px;border-radius:50%;border:1px solid #5d7cae;background:radial-gradient(#fff,#dce7f5)"></div>
<div style="left:715.5px;top:475.3px;width:5px;height:1.2px;background:#2e3f63"></div>
<svg style="left:751.5px;top:470.5px" width="8" height="10"><path d="M0.5 0.5H7.5V6L4 9.5L0.5 6Z" fill="#f3f7fc" stroke="#6e87ae" stroke-width="0.8"/><path d="M4 2V5.5" stroke="#6e87ae" stroke-width="0.6"/></svg>
<div style="left:787.5px;top:470px;width:11px;height:11px;border-radius:50%;border:1px solid #5d7cae;background:radial-gradient(#fff,#dce7f5)"></div>
<svg style="left:789.5px;top:472px" width="7" height="7"><path d="M3.5 0.5V6.5M0.5 3.5H6.5" stroke="#2e3f63" stroke-width="1.3"/></svg>
<div style="left:0;top:481.7px;width:800px;height:18.3px;background:linear-gradient(#2e4457,#3d596f 12%,#415d73 60%,#49657b)"></div>
<div style="left:3.4px;top:484.1px;width:40px;height:14px;border:1px solid #2a3c4a;border-radius:3px;background:linear-gradient(#a2b3c0,#7a92a5 40%,#637d92 60%,#5a7489)"></div>
<svg style="left:7px;top:485.5px" width="12" height="11"><path d="M1 2Q3 1 5.3 2V5.2Q3 4.2 1 5.2Z" fill="#f05a24"/><path d="M6 2.2Q8.5 1 11 2V5.2Q8.5 4.2 6 5.2Z" fill="#7cc242"/><path d="M0.5 6Q2.8 5 5 6V9.5Q2.8 8.5 0.5 9.5Z" fill="#3a8fe6"/><path d="M5.7 6Q8 5 10.5 6V9.5Q8 8.5 5.7 9.5Z" fill="#fbc31a"/></svg>
<div style="left:20.5px;top:486px;font-size:9px;color:#fff;line-height:10px;text-shadow:0 0 0.4px #fff">start</div>
<div style="left:54px;top:486px;width:8.5px;height:9.5px;background:linear-gradient(#dfeefc,#6aa6ea);border-radius:2px;border:1px solid #3068b8"></div>
<div style="left:56px;top:488px;font-size:6px;font-weight:bold;color:#1d4fa0;line-height:6px">C</div>
<svg style="left:68px;top:485.5px" width="11" height="11"><ellipse cx="5.5" cy="5.5" rx="5" ry="2" fill="none" stroke="#f0c020" stroke-width="1" transform="rotate(-35 5.5 5.5)"/><text x="1.2" y="10" font-family="Liberation Sans" font-weight="bold" font-size="11.5" fill="#2a7fe0">e</text></svg>
<svg style="left:83px;top:486px" width="10" height="10"><circle cx="5" cy="5" r="4.5" fill="#4a6db8"/><path d="M1 6Q5 3 9 6Q8 9 5 9.5Q2 9 1 6Z" fill="#e8b060"/><circle cx="6" cy="4" r="1.5" fill="#fff"/></svg>
<div style="left:99px;top:484.5px;font-size:7px;color:#8ec2f0;line-height:7px">»</div>
<div class="tbtn" style="left:111.5px;width:84px">Windows Live M...</div>
<div class="tbtn act" style="left:198.75px;width:85px">EViews - [Series:...</div>
<div class="tbtn" style="left:287px;width:84.75px">EViews 6 Users ...</div>
<div class="tbtn" style="left:375.5px;width:84.5px">Nouveau Docum...</div>
<div class="tbtn" style="left:463.75px;width:84.25px">correction.doc [...</div>
<div class="tbtn" style="left:551.5px;width:84.5px">Windows Live Ho...</div>
<div class="tbtn" style="left:640px;width:83.5px">Téléchargements</div>
<svg style="left:117px;top:486px" width="14" height="11"><rect x="3" y="0.5" width="3" height="9" rx="1.5" fill="#52b848"/><circle cx="4.5" cy="2" r="1.8" fill="#7ed46a"/><rect x="7.5" y="1" width="4" height="9" rx="2" fill="#3a8ed8"/><circle cx="9.5" cy="2.5" r="2" fill="#8ad0f8"/><path d="M0.5 6Q5 4.5 13 7.5Q8 8 3 9Z" fill="#f6b430"/></svg>
<svg style="left:203.5px;top:486px" width="11" height="11"><rect x="0.5" y="0.5" width="9" height="7" fill="#fff" stroke="#2f4fb0" stroke-width="0.8"/><path d="M1 6.5L9 1.5" stroke="#e02020" stroke-width="1.5"/><rect x="2" y="7.5" width="7" height="3" fill="#f0a020"/><rect x="3" y="8" width="5" height="2" fill="#d02020"/></svg>
<svg style="left:291.5px;top:485.5px" width="11" height="12"><path d="M1.5 0.5H7.5L10 3V11.5H1.5Z" fill="#fff" stroke="#bbb" stroke-width="0.6"/><path d="M2 3.5H8L4.5 8H9" stroke="#d81e1e" stroke-width="1.6" fill="none"/></svg>
<svg style="left:380px;top:486px" width="11" height="11"><rect x="0.5" y="0.5" width="10" height="10" fill="#5f8fd8" stroke="#2e5aa8" stroke-width="0.7"/><rect x="2.5" y="2.5" width="6" height="7" fill="#eef4fc"/><rect x="3.5" y="4" width="4" height="0.8" fill="#5f8fd8"/><rect x="3.5" y="6" width="4" height="0.8" fill="#5f8fd8"/></svg>
<svg style="left:468px;top:486px" width="11" height="11"><rect x="0.5" y="0.5" width="10" height="10" fill="#5f8fd8" stroke="#2e5aa8" stroke-width="0.7"/><rect x="2.5" y="2.5" width="6" height="7" fill="#eef4fc"/><rect x="3.5" y="4" width="4" height="0.8" fill="#5f8fd8"/><rect x="3.5" y="6" width="4" height="0.8" fill="#5f8fd8"/></svg>
<svg style="left:556px;top:485.5px" width="12" height="12"><circle cx="6" cy="6" r="5.3" fill="#2d4b9c"/><path d="M1.2 8Q1 2 6 0.8Q11 1 11.2 6Q10 11 5 11.3Q9 9 8 6Q6 3.5 4 5Q5 2 3 3Q1.5 5 1.2 8Z" fill="#f08020"/><path d="M3 2.5Q5 1 7 1.5" stroke="#ffd040" stroke-width="1" fill="none"/></svg>
<svg style="left:644px;top:485.5px" width="12" height="12"><circle cx="6" cy="6" r="5.3" fill="#2d4b9c"/><path d="M1.2 8Q1 2 6 0.8Q11 1 11.2 6Q10 11 5 11.3Q9 9 8 6Q6 3.5 4 5Q5 2 3 3Q1.5 5 1.2 8Z" fill="#f08020"/><path d="M3 2.5Q5 1 7 1.5" stroke="#ffd040" stroke-width="1" fill="none"/></svg>
<div style="left:727px;top:481.7px;width:73px;height:18.3px;background:linear-gradient(#324a5e,#3f5b71 15%,#4a667c)"></div>
<div style="left:732.5px;top:488px;font-size:7px;color:#e6eef5;line-height:8px">FR</div>
<div style="left:748.5px;top:485.5px;width:9.5px;height:12px;border:1px solid #20323f;border-radius:2px;background:linear-gradient(#a6c2d8,#6e98ba)"></div>
<svg style="left:751px;top:488.5px" width="5" height="6"><path d="M4.5 0.5L0.5 3L4.5 5.5Z" fill="#fff"/></svg>
<svg style="left:761px;top:486px" width="12" height="11"><rect x="1" y="3" width="6" height="5" fill="#2a3a8a" stroke="#c8d4e4" stroke-width="0.8"/><rect x="2" y="8.5" width="4" height="1.5" fill="#c8d4e4"/><path d="M8 2Q9 3.5 8 5M9.5 1Q11 3.5 9.5 6" stroke="#dfe8f0" stroke-width="0.7" fill="none"/></svg>
<div style="left:775px;top:488px;font-size:7.5px;color:#f2f6fa;line-height:8px">10:21</div>

<div id="ev">
 <div id="evtitle">
  <svg style="left:3.9px;top:4.6px" width="10" height="10"><rect x="0.5" y="0.5" width="9" height="6" fill="#fff" stroke="#2f4fb0" stroke-width="0.9"/><path d="M1 5.5L8.5 1.5" stroke="#e02020" stroke-width="1.4"/><rect x="1.5" y="7" width="7" height="2.8" fill="#f2b020"/><rect x="2.5" y="7.5" width="5" height="2" fill="#d83020"/></svg>
  <div id="evtt">EViews - [Series: VALUE &nbsp; Workfile: EXUSEU(1)::Untitled\]</div>
  <div style="left:462.4px;top:4.8px;width:9.6px;height:9.6px;border:1px solid #1e3140;border-radius:1.5px;background:linear-gradient(#87acc7,#5f8aab)"></div>
  <div style="left:464.8px;top:11px;width:4.5px;height:1.5px;background:#1b2a36"></div>
  <div style="left:474.6px;top:4.8px;width:9.6px;height:9.6px;border:1px solid #1e3140;border-radius:1.5px;background:linear-gradient(#87acc7,#5f8aab)"></div>
  <div style="left:477px;top:7px;width:5px;height:5px;border:1px solid #1b2a36;border-top-width:1.6px"></div>
  <div style="left:486.6px;top:4.8px;width:9.6px;height:9.6px;border:1px solid #2e1e1e;border-radius:1.5px;background:linear-gradient(#dc8a7a,#b5483a)"></div>
  <svg style="left:488.6px;top:6.8px" width="6" height="6"><path d="M0.8 0.8L5.2 5.2M5.2 0.8L0.8 5.2" stroke="#fff" stroke-width="1.5"/></svg>
 </div>
 <div id="evmenu">
  <div style="left:3.2px;top:1.7px;width:9.6px;height:8px;border:1px solid #000;border-top:2px solid #1f2f8f;background:#fff"></div>
  <div style="left:5px;top:4.5px;width:0.7px;height:4px;background:#999"></div><div style="left:7.5px;top:4.5px;width:0.7px;height:4px;background:#999"></div><div style="left:10px;top:4.5px;width:0.7px;height:4px;background:#999"></div>
  <span style="left:15.8px">File</span><span style="left:33.5px">Edit</span><span style="left:52.5px">Object</span><span style="left:80px">View</span><span style="left:101px">Proc</span><span style="left:121.5px">Quick</span><span style="left:146px">Options</span><span style="left:177px">Window</span><span style="left:207.5px">Help</span>
  <div style="left:462.8px;top:1.5px;width:9.6px;height:10.5px;background:#e6e3d4"></div>
  <div style="left:465.5px;top:8px;width:4.5px;height:1.3px;background:#333"></div>
  <div style="left:474.2px;top:1.5px;width:9.6px;height:10.5px;background:#e6e3d4"></div>
  <div style="left:477.8px;top:3px;width:4.2px;height:3.8px;border:1px solid #555;border-top-width:1.4px"></div>
  <div style="left:476.3px;top:4.8px;width:4.2px;height:3.8px;border:1px solid #555;border-top-width:1.4px;background:#e6e3d4"></div>
  <div style="left:485px;top:1.5px;width:9.6px;height:10.5px;background:#e6e3d4"></div>
  <svg style="left:487.3px;top:4px" width="6" height="6"><path d="M0.8 0.8L5.2 5.2M5.2 0.8L0.8 5.2" stroke="#444" stroke-width="1.1"/></svg>
 </div>
 <div id="evtool">
  <div class="tb" style="left:-2px;width:18px">View</div>
  <div class="tb" style="left:18px;width:16.5px">Proc</div>
  <div class="tb" style="left:36px;width:23px">Object</div>
  <div class="tb" style="left:61px;width:33px">Properties</div>
  <div class="tb" style="left:98px;width:17.5px">Print</div>
  <div class="tb" style="left:116px;width:20.5px">Name</div>
  <div class="tb" style="left:137px;width:24.5px">Freeze</div>
  <div class="tb" style="left:165px;width:25px">Sample</div>
  <div class="tb" style="left:191px;width:18px">Genr</div>
  <div class="tb" style="left:210px;width:21.5px">Sheet</div>
  <div class="tb" style="left:232.5px;width:21px">Graph</div>
  <div class="tb" style="left:254.5px;width:18.5px">Stats</div>
  <div class="tb" style="left:274px;width:19.5px">Ident</div>
 </div>
</div>
<div style="left:220px;top:122px;width:496px;height:346px;background:#fff"></div>
<div style="left:220px;top:122px;width:496px;height:14px;background:#ece9d8;border-top:1.5px solid #111;border-bottom:1px solid #999"></div>
<div style="left:400px;top:125.5px;width:107px;text-align:right;font-size:7.3px;font-weight:bold;color:#111;line-height:8px">Correlogram of VALUE</div>
<div class="t7" style="left:223.5px;top:140.5px">Date: 08/11/10 &nbsp; Time: 10:17</div>
<div class="t7" style="left:223.5px;top:150.2px">Sample: 1999M01 2010M03</div>
<div class="t7" style="left:223.5px;top:159.9px">Included observations: 135</div>
<div style="left:221px;top:172px;width:269px;height:3px;border-top:1px solid #111;border-bottom:1px solid #111"></div>
<div class="t7" style="left:233px;top:179px">Autocorrelation</div>
<div class="t7" style="left:299.5px;top:179px">Partial Correlation</div>
<div class="t7" style="left:386.5px;top:179px">AC</div>
<div class="t7" style="left:412.5px;top:179px">PAC</div>
<div class="t7" style="left:438.5px;top:179px">Q-Stat</div>
<div class="t7" style="left:469px;top:179px">Prob</div>
<div style="left:221px;top:191px;width:269px;height:3px;border-top:1px solid #111;border-bottom:1px solid #111"></div>
<div style="left:258px;top:194px;width:1px;height:181px;background:#888"></div>
<div style="left:295px;top:194px;width:1px;height:181px;background:#999"></div>
<div style="left:330.3px;top:194px;width:1px;height:181px;background:#888"></div>
<div style="left:367px;top:194px;width:1px;height:181px;background:#999"></div>
<div class="dash g" style="left:336.5px;top:368.6px"></div>
<div class="dash" style="left:324px;top:368.6px"></div>
<div class="dash" style="left:252px;top:368.6px"></div>
<div class="dash g" style="left:336.5px;top:359.1px"></div>
<div class="dash" style="left:324px;top:359.1px"></div>
<div class="dash" style="left:252px;top:359.1px"></div>
<div class="dash g" style="left:336.5px;top:349.7px"></div>
<div class="dash" style="left:324px;top:349.7px"></div>
<div class="dash" style="left:252px;top:349.7px"></div>
<div class="dash g" style="left:336.5px;top:340.3px"></div>
<div class="dash" style="left:324px;top:340.3px"></div>
<div class="dash" style="left:252px;top:340.3px"></div>
<div class="dash g" style="left:336.5px;top:330.9px"></div>
<div class="dash" style="left:324px;top:330.9px"></div>
<div class="dash" style="left:252px;top:330.9px"></div>
<div class="dash g" style="left:336.5px;top:321.5px"></div>
<div class="dash" style="left:324px;top:321.5px"></div>
<div class="dash" style="left:252px;top:321.5px"></div>
<div class="dash g" style="left:336.5px;top:312.0px"></div>
<div class="dash" style="left:324px;top:312.0px"></div>
<div class="dash" style="left:252px;top:312.0px"></div>
<div class="dash g" style="left:336.5px;top:302.6px"></div>
<div class="dash" style="left:324px;top:302.6px"></div>
<div class="dash" style="left:252px;top:302.6px"></div>
<div class="dash g" style="left:336.5px;top:293.2px"></div>
<div class="dash" style="left:324px;top:293.2px"></div>
<div class="dash" style="left:252px;top:293.2px"></div>
<div class="dash g" style="left:336.5px;top:283.8px"></div>
<div class="dash" style="left:324px;top:283.8px"></div>
<div class="dash" style="left:252px;top:283.8px"></div>
<div class="dash g" style="left:336.5px;top:274.4px"></div>
<div class="dash" style="left:324px;top:274.4px"></div>
<div class="dash" style="left:252px;top:274.4px"></div>
<div class="dash g" style="left:336.5px;top:264.9px"></div>
<div class="dash" style="left:324px;top:264.9px"></div>
<div class="dash" style="left:252px;top:264.9px"></div>
<div class="dash g" style="left:336.5px;top:255.5px"></div>
<div class="dash" style="left:324px;top:255.5px"></div>
<div class="dash" style="left:252px;top:255.5px"></div>
<div class="dash g" style="left:336.5px;top:246.1px"></div>
<div class="dash" style="left:324px;top:246.1px"></div>
<div class="dash" style="left:252px;top:246.1px"></div>
<div class="dash g" style="left:336.5px;top:236.7px"></div>
<div class="dash" style="left:324px;top:236.7px"></div>
<div class="dash" style="left:252px;top:236.7px"></div>
<div class="dash g" style="left:336.5px;top:227.3px"></div>
<div class="dash" style="left:324px;top:227.3px"></div>
<div class="dash" style="left:252px;top:227.3px"></div>
<div class="dash g" style="left:336.5px;top:217.8px"></div>
<div class="dash" style="left:324px;top:217.8px"></div>
<div class="dash" style="left:252px;top:217.8px"></div>
<div class="dash g" style="left:336.5px;top:208.4px"></div>
<div class="dash" style="left:324px;top:208.4px"></div>
<div class="dash" style="left:252px;top:208.4px"></div>
<div class="dash g" style="left:336.5px;top:199.0px"></div>
<div class="dash" style="left:324px;top:199.0px"></div>
<div class="dash" style="left:252px;top:199.0px"></div>
<div class="bar" style="left:258.4px;top:198.1px;width:35.0px"></div>
<div class="bar" style="left:330.7px;top:198.1px;width:35.0px"></div>
<div class="num" style="left:355px;width:24px;top:197.6px">1</div>
<div class="num" style="left:380px;width:26px;top:197.6px">0.985</div>
<div class="num" style="left:404px;width:28px;top:197.6px">0.985</div>
<div class="num" style="left:434px;width:28px;top:197.6px">134.04</div>
<div class="num" style="left:462px;width:26.5px;top:197.6px">0.000</div>
<div class="bar" style="left:258.4px;top:207.5px;width:34.2px"></div>
<div class="bar" style="left:320.4px;top:207.5px;width:10.3px"></div>
<div class="num" style="left:355px;width:24px;top:207.0px">2</div>
<div class="num" style="left:380px;width:26px;top:207.0px">0.963</div>
<div class="num" style="left:404px;width:28px;top:207.0px">-0.289</div>
<div class="num" style="left:434px;width:28px;top:207.0px">262.95</div>
<div class="num" style="left:462px;width:26.5px;top:207.0px">0.000</div>
<div class="bar" style="left:258.4px;top:216.9px;width:33.3px"></div>
<div class="bar" style="left:330.2px;top:216.9px;width:1.0px"></div>
<div class="num" style="left:355px;width:24px;top:216.4px">3</div>
<div class="num" style="left:380px;width:26px;top:216.4px">0.938</div>
<div class="num" style="left:404px;width:28px;top:216.4px">-0.014</div>
<div class="num" style="left:434px;width:28px;top:216.4px">386.22</div>
<div class="num" style="left:462px;width:26.5px;top:216.4px">0.000</div>
<div class="bar" style="left:258.4px;top:226.4px;width:32.4px"></div>
<div class="bar" style="left:329.4px;top:226.4px;width:1.3px"></div>
<div class="num" style="left:355px;width:24px;top:225.9px">4</div>
<div class="num" style="left:380px;width:26px;top:225.9px">0.912</div>
<div class="num" style="left:404px;width:28px;top:225.9px">-0.038</div>
<div class="num" style="left:434px;width:28px;top:225.9px">503.58</div>
<div class="num" style="left:462px;width:26.5px;top:225.9px">0.000</div>
<div class="bar" style="left:258.4px;top:235.8px;width:31.3px"></div>
<div class="bar" style="left:328.1px;top:235.8px;width:2.6px"></div>
<div class="num" style="left:355px;width:24px;top:235.3px">5</div>
<div class="num" style="left:380px;width:26px;top:235.3px">0.883</div>
<div class="num" style="left:404px;width:28px;top:235.3px">-0.072</div>
<div class="num" style="left:434px;width:28px;top:235.3px">614.61</div>
<div class="num" style="left:462px;width:26.5px;top:235.3px">0.000</div>
<div class="bar" style="left:258.4px;top:245.2px;width:30.3px"></div>
<div class="bar" style="left:329.7px;top:245.2px;width:1.0px"></div>
<div class="num" style="left:355px;width:24px;top:244.7px">6</div>
<div class="num" style="left:380px;width:26px;top:244.7px">0.854</div>
<div class="num" style="left:404px;width:28px;top:244.7px">-0.027</div>
<div class="num" style="left:434px;width:28px;top:244.7px">719.12</div>
<div class="num" style="left:462px;width:26.5px;top:244.7px">0.000</div>
<div class="bar" style="left:258.4px;top:254.6px;width:29.3px"></div>
<div class="bar" style="left:330.7px;top:254.6px;width:3.2px"></div>
<div class="num" style="left:355px;width:24px;top:254.1px">7</div>
<div class="num" style="left:380px;width:26px;top:254.1px">0.826</div>
<div class="num" style="left:404px;width:28px;top:254.1px">0.089</div>
<div class="num" style="left:434px;width:28px;top:254.1px">817.79</div>
<div class="num" style="left:462px;width:26.5px;top:254.1px">0.000</div>
<div class="bar" style="left:258.4px;top:264.0px;width:28.5px"></div>
<div class="bar" style="left:330.7px;top:264.0px;width:4.8px"></div>
<div class="num" style="left:355px;width:24px;top:263.5px">8</div>
<div class="num" style="left:380px;width:26px;top:263.5px">0.804</div>
<div class="num" style="left:404px;width:28px;top:263.5px">0.136</div>
<div class="num" style="left:434px;width:28px;top:263.5px">911.95</div>
<div class="num" style="left:462px;width:26.5px;top:263.5px">0.000</div>
<div class="bar" style="left:258.4px;top:273.5px;width:27.8px"></div>
<div class="bar" style="left:328.0px;top:273.5px;width:2.7px"></div>
<div class="num" style="left:355px;width:24px;top:273.0px">9</div>
<div class="num" style="left:380px;width:26px;top:273.0px">0.783</div>
<div class="num" style="left:404px;width:28px;top:273.0px">-0.076</div>
<div class="num" style="left:434px;width:28px;top:273.0px">1001.9</div>
<div class="num" style="left:462px;width:26.5px;top:273.0px">0.000</div>
<div class="bar" style="left:258.4px;top:282.9px;width:27.0px"></div>
<div class="bar" style="left:330.1px;top:282.9px;width:1.0px"></div>
<div class="num" style="left:355px;width:24px;top:282.4px">10</div>
<div class="num" style="left:380px;width:26px;top:282.4px">0.761</div>
<div class="num" style="left:404px;width:28px;top:282.4px">-0.017</div>
<div class="num" style="left:434px;width:28px;top:282.4px">1087.6</div>
<div class="num" style="left:462px;width:26.5px;top:282.4px">0.000</div>
<div class="bar" style="left:258.4px;top:292.3px;width:26.3px"></div>
<div class="bar" style="left:330.7px;top:292.3px;width:1.8px"></div>
<div class="num" style="left:355px;width:24px;top:291.8px">11</div>
<div class="num" style="left:380px;width:26px;top:291.8px">0.742</div>
<div class="num" style="left:404px;width:28px;top:291.8px">0.052</div>
<div class="num" style="left:434px;width:28px;top:291.8px">1169.7</div>
<div class="num" style="left:462px;width:26.5px;top:291.8px">0.000</div>
<div class="bar" style="left:258.4px;top:301.7px;width:25.7px"></div>
<div class="bar" style="left:330.7px;top:301.7px;width:1.0px"></div>
<div class="num" style="left:355px;width:24px;top:301.2px">12</div>
<div class="num" style="left:380px;width:26px;top:301.2px">0.724</div>
<div class="num" style="left:404px;width:28px;top:301.2px">0.010</div>
<div class="num" style="left:434px;width:28px;top:301.2px">1248.6</div>
<div class="num" style="left:462px;width:26.5px;top:301.2px">0.000</div>
<div class="bar" style="left:258.4px;top:311.1px;width:25.2px"></div>
<div class="bar" style="left:330.7px;top:311.1px;width:1.8px"></div>
<div class="num" style="left:355px;width:24px;top:310.6px">13</div>
<div class="num" style="left:380px;width:26px;top:310.6px">0.710</div>
<div class="num" style="left:404px;width:28px;top:310.6px">0.050</div>
<div class="num" style="left:434px;width:28px;top:310.6px">1324.9</div>
<div class="num" style="left:462px;width:26.5px;top:310.6px">0.000</div>
<div class="bar" style="left:258.4px;top:320.6px;width:24.7px"></div>
<div class="bar" style="left:330.7px;top:320.6px;width:1.5px"></div>
<div class="num" style="left:355px;width:24px;top:320.1px">14</div>
<div class="num" style="left:380px;width:26px;top:320.1px">0.697</div>
<div class="num" style="left:404px;width:28px;top:320.1px">0.043</div>
<div class="num" style="left:434px;width:28px;top:320.1px">1399.1</div>
<div class="num" style="left:462px;width:26.5px;top:320.1px">0.000</div>
<div class="bar" style="left:258.4px;top:330.0px;width:24.2px"></div>
<div class="bar" style="left:325.1px;top:330.0px;width:5.6px"></div>
<div class="num" style="left:355px;width:24px;top:329.5px">15</div>
<div class="num" style="left:380px;width:26px;top:329.5px">0.681</div>
<div class="num" style="left:404px;width:28px;top:329.5px">-0.158</div>
<div class="num" style="left:434px;width:28px;top:329.5px">1470.5</div>
<div class="num" style="left:462px;width:26.5px;top:329.5px">0.000</div>
<div class="bar" style="left:258.4px;top:339.4px;width:23.5px"></div>
<div class="bar" style="left:327.5px;top:339.4px;width:3.2px"></div>
<div class="num" style="left:355px;width:24px;top:338.9px">16</div>
<div class="num" style="left:380px;width:26px;top:338.9px">0.661</div>
<div class="num" style="left:404px;width:28px;top:338.9px">-0.090</div>
<div class="num" style="left:434px;width:28px;top:338.9px">1538.5</div>
<div class="num" style="left:462px;width:26.5px;top:338.9px">0.000</div>
<div class="bar" style="left:258.4px;top:348.8px;width:22.8px"></div>
<div class="bar" style="left:330.7px;top:348.8px;width:2.6px"></div>
<div class="num" style="left:355px;width:24px;top:348.3px">17</div>
<div class="num" style="left:380px;width:26px;top:348.3px">0.643</div>
<div class="num" style="left:404px;width:28px;top:348.3px">0.072</div>
<div class="num" style="left:434px;width:28px;top:348.3px">1603.2</div>
<div class="num" style="left:462px;width:26.5px;top:348.3px">0.000</div>
<div class="bar" style="left:258.4px;top:358.2px;width:22.0px"></div>
<div class="bar" style="left:323.0px;top:358.2px;width:7.7px"></div>
<div class="num" style="left:355px;width:24px;top:357.7px">18</div>
<div class="num" style="left:380px;width:26px;top:357.7px">0.619</div>
<div class="num" style="left:404px;width:28px;top:357.7px">-0.218</div>
<div class="num" style="left:434px;width:28px;top:357.7px">1663.8</div>
<div class="num" style="left:462px;width:26.5px;top:357.7px">0.000</div>
<div class="bar" style="left:258.4px;top:367.7px;width:20.9px"></div>
<div class="bar" style="left:324.4px;top:367.7px;width:6.3px"></div>
<div class="num" style="left:355px;width:24px;top:367.2px">19</div>
<div class="num" style="left:380px;width:26px;top:367.2px">0.588</div>
<div class="num" style="left:404px;width:28px;top:367.2px">-0.178</div>
<div class="num" style="left:434px;width:28px;top:367.2px">1718.9</div>
<div class="num" style="left:462px;width:26.5px;top:367.2px">0.000</div>
<div style="left:221px;top:379px;width:269px;height:2px;background:#aaa"></div>
<div style="left:220px;top:468px;width:496px;height:11.5px;background:#ece9d8;border-top:1px solid #d8d4c0"></div>
<div style="left:222px;top:470px;width:7px;height:7px;border:1px solid #4a6aa0;border-radius:1px;background:#f4f6fa"></div>
<div style="left:429.4px;top:471.5px;font-size:6.85px;color:#222;line-height:8px">Path = c:\documents and settings\salva\mes documents</div>
<div style="left:603.5px;top:469.5px;width:2px;height:10px;background:#fff;border-left:1px solid #c9c5b2"></div>
<div style="left:608.4px;top:471.5px;font-size:6.85px;color:#222;line-height:8px">DB = none</div>
<div style="left:644.5px;top:469.5px;width:2px;height:10px;background:#fff;border-left:1px solid #c9c5b2"></div>
<div style="left:649.5px;top:471.5px;font-size:6.85px;color:#222;line-height:8px">WF = exuseu(1)</div>
<div style="left:703px;top:469.5px;width:2px;height:10px;background:#fff;border-left:1px solid #c9c5b2"></div>
<svg style="left:707px;top:472px" width="8" height="7"><g fill="#aaa"><rect x="6" y="0" width="1" height="1"/><rect x="4" y="2" width="1" height="1"/><rect x="6" y="2" width="1" height="1"/><rect x="2" y="4" width="1" height="1"/><rect x="4" y="4" width="1" height="1"/><rect x="6" y="4" width="1" height="1"/><rect x="0" y="6" width="1" height="1"/><rect x="2" y="6" width="1" height="1"/><rect x="4" y="6" width="1" height="1"/><rect x="6" y="6" width="1" height="1"/></g></svg>
<div style="left:241px;top:471px;width:174.5px;height:10px;background:#ffffe1;border:1px solid #111;font-size:6.85px;color:#111;line-height:8px;padding-left:1.5px;font-size:6.6px">EViews - [Series: VALUE &nbsp; Workfile: EXUSEU(1)::Untitled\]</div>

</body></html>
